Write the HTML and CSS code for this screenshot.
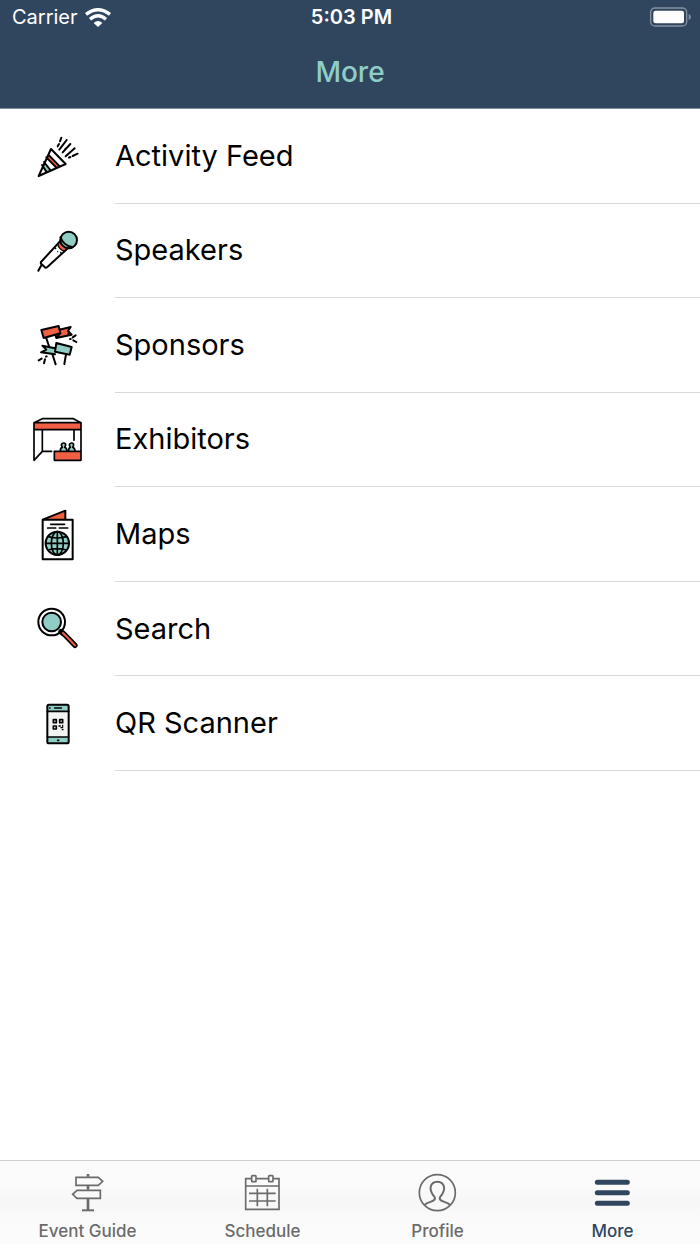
FILE: index.html
```html
<!DOCTYPE html>
<html lang="en">
<head>
<meta charset="utf-8">
<meta name="viewport" content="width=device-width, initial-scale=1">
<title>More</title>
<link rel="stylesheet" href="styles.css">
</head>
<body>
<div class="app">
  <header class="header">
    <div class="status">
      <div class="status-left">
        <span>Carrier</span>
        <svg class="wifi" viewBox="0 0 78 57" aria-hidden="true">
          <g fill="none" stroke="#fff" stroke-width="10">
            <path d="M3 19Q39-9 75 19"/>
            <path d="M15 34Q39 13 63 34"/>
          </g>
          <path d="M26 45Q39 33 52 45L39 57Z" fill="#fff"/>
        </svg>
      </div>
      <span class="status-time">5:03 PM</span>
      <div class="status-right">
        <svg class="battery" viewBox="0 0 126 60" aria-hidden="true">
          <rect x="5" y="3" width="108" height="54" rx="13" fill="none" stroke="#8290a0" stroke-width="4"/>
          <rect x="13" y="11" width="92" height="38" rx="7" fill="#fff"/>
          <path d="M119 20q7 4 7 10t-7 10z" fill="#8290a0"/>
        </svg>
      </div>
    </div>
    <h1 class="title">More</h1>
  </header>

  <main class="main">
    <ul class="list">
      <li class="item"><a class="link" href="#activity">
        <svg class="icon" viewBox="0 0 210 180" aria-hidden="true">
          <path d="M64 94L70 86L104 121L94 125Z" fill="#f15f44"/>
          <path d="M51 117L57 108L76 132L64 137Z" fill="#8fcdc5"/>
          <g class="ink">
            <path d="M78 69L122 114L41 150ZM70 86L104 121M64 94L94 125M57 108L76 132M51 117L64 137"/>
            <path d="M109 35L105 46M102 54L98 61M125 42L103 71M136 54L113 79M149 67L122 91M158 83L143 90M136 93L132 95M122 68L121 69"/>
          </g>
        </svg>
        <span class="label">Activity Feed</span></a></li>
      <li class="item"><a class="link" href="#speakers">
        <svg class="icon" viewBox="0 0 210 180" aria-hidden="true">
          <path d="M106 60Q106 77 127 83L119 92Q102 86 98 70Z" fill="#f15f44"/>
          <circle cx="131" cy="57" r="25" fill="#8fcdc5"/>
          <g class="ink">
            <circle cx="131" cy="57" r="25"/>
            <path d="M107 49Q113 73 143 79M106 60L48 123Q46 127 50 130L60 139Q64 142 68 137L127 83M50 131L40 149"/>
            <path d="M98 70Q102 85 119 91M90 80L92 83M98 92V92M107 94L110 99" stroke-width="4"/>
          </g>
        </svg>
        <span class="label">Speakers</span></a></li>
      <li class="item"><a class="link" href="#sponsors">
        <svg class="icon" viewBox="0 0 210 180" aria-hidden="true">
          <path d="M49 45L101 33L106 55L56 69ZM103 44L137 36L129 48L140 59L94 69L91 59Z" fill="#f15f44"/>
          <path d="M94 84L140 96L134 119L90 110ZM52 92L90 100V118L48 112L64 104Z" fill="#8fcdc5"/>
          <g class="ink">
            <path d="M49 45L101 33L106 55L56 69ZM103 44L137 36L129 48L140 59L94 69L91 59M94 69L106 55"/>
            <path d="M94 84L140 96L134 119L90 110ZM90 100L52 92L64 104L48 112L90 118"/>
            <path d="M64 70L73 96M82 117L92 148M123 118L118 147M130 57L131 60M135 72H137M143 67L152 61M145 76L154 81M41 136L50 131M57 145L60 133M63 125L65 124"/>
          </g>
        </svg>
        <span class="label">Sponsors</span></a></li>
      <li class="item"><a class="link" href="#exhibitors">
        <svg class="icon" viewBox="0 0 210 180" aria-hidden="true">
          <path d="M27 38H168V59H27ZM88 124H167V151H88Z" fill="#f15f44"/>
          <path d="M106 122Q106 113 112 112L109 105Q110 99 116 99T122 105L119 112Q125 113 126 122ZM131 122Q131 113 136 112L133 105Q134 99 140 99T146 105L143 112Q149 113 150 122Z" fill="#8fcdc5"/>
          <g class="ink">
            <path d="M27 38L52 26H145L168 38V151H88V124H167M27 38H168M27 59H168M27 38V151L52 124H80M52 61V124M147 61V91" stroke-width="5"/>
            <path d="M106 122Q106 113 112 112L109 105Q110 99 116 99T122 105L119 112Q125 113 126 122M131 122Q131 113 136 112L133 105Q134 99 140 99T146 105L143 112Q149 113 150 122" stroke-width="5"/>
          </g>
        </svg>
        <span class="label">Exhibitors</span></a></li>
      <li class="item"><a class="link" href="#maps">
        <svg class="icon" viewBox="0 0 210 200" aria-hidden="true">
          <path d="M53 56L121 29V56Z" fill="#f15f44"/>
          <circle cx="97" cy="127" r="35" fill="#8fcdc5"/>
          <g class="ink">
            <path d="M53 56L121 29V56M53 56H143V175H53Z"/>
            <path d="M77 70H119M68 81H92M103 81H128" stroke-width="5"/>
            <circle cx="97" cy="127" r="35"/>
            <ellipse cx="97" cy="127" rx="18" ry="35" stroke-width="5"/>
            <path d="M97 92V162M62 127H132M70 107Q97 115 124 107M70 147Q97 139 124 147" stroke-width="5"/>
          </g>
        </svg>
        <span class="label">Maps</span></a></li>
      <li class="item"><a class="link" href="#search">
        <svg class="icon" viewBox="0 0 210 180" aria-hidden="true">
          <circle cx="80" cy="69" r="28" fill="#8fcdc5"/>
          <g class="ink">
            <circle cx="80" cy="69" r="28"/>
            <circle cx="80" cy="69" r="40"/>
            <path d="M108 98L114 104M114 102L150 139" stroke-width="16"/>
          </g>
          <path d="M114 102L150 139" fill="none" stroke="#f15f44" stroke-width="6" stroke-linecap="round"/>
        </svg>
        <span class="label">Search</span></a></li>
      <li class="item"><a class="link" href="#qr">
        <svg class="icon" viewBox="0 0 210 180" aria-hidden="true">
          <rect x="67" y="32" width="64" height="116" rx="5" fill="#8fcdc5"/>
          <path d="M67 52H131V129H67Z" fill="#f2f3f3"/>
          <g class="ink">
            <rect x="67" y="32" width="64" height="116" rx="5"/>
            <path d="M67 52H131M67 129H131M89 42H109M74 42H75M98 139H101" stroke-width="5"/>
            <path d="M85 77H94V86H85ZM104 77H113V86H104ZM85 96H94V105H85Z" stroke-width="5"/>
            <path d="M102 96H106M113 94V97M108 101H113M112 107H114" stroke-width="4"/>
          </g>
        </svg>
        <span class="label">QR Scanner</span></a></li>
    </ul>
  </main>

  <nav class="tabs" aria-label="Main">
    <a class="tab" href="#guide">
      <svg class="tab-icon" viewBox="0 0 120 120" aria-hidden="true">
        <g fill="none" stroke="#6b6b6b" stroke-width="5">
          <path d="M24 13H91L104 25L91 37H24ZM97 52H27L14 64L27 76H97Z"/>
          <path d="M60 3V11M60 39V50M60 78V113" stroke-width="8"/>
          <path d="M42 112H78" stroke-width="6"/>
        </g>
      </svg>
      <span>Event Guide</span>
    </a>
    <a class="tab" href="#schedule">
      <svg class="tab-icon" viewBox="2 0 120 120" aria-hidden="true">
        <g fill="none" stroke="#6b6b6b" stroke-width="5">
          <path d="M27 17H10V109H110V17H93M42 17H78M10 39H110M20 61H100M20 84H100M45 47V100M75 47V100"/>
          <rect x="28" y="8" width="13" height="18" rx="2"/>
          <rect x="79" y="8" width="13" height="18" rx="2"/>
        </g>
      </svg>
      <span>Schedule</span>
    </a>
    <a class="tab" href="#profile">
      <svg class="tab-icon" viewBox="2 0 120 120" aria-hidden="true">
        <g fill="none" stroke="#6b6b6b" stroke-width="5">
          <circle cx="60" cy="59" r="54"/>
          <path stroke-width="6" d="M22 96Q26 91 41 86Q53 82 53 76Q53 72 47 66Q38 52 40 42Q43 26 60 26T80 42Q82 52 73 66Q67 72 67 76Q67 82 79 86Q94 91 98 96"/>
        </g>
      </svg>
      <span>Profile</span>
    </a>
    <a class="tab tab-active" href="#more" aria-current="page">
      <svg class="tab-icon" viewBox="2 0 120 120" aria-hidden="true">
        <path d="M15 28H105M15 59H105M15 91H105" fill="none" stroke="#30465f" stroke-width="15" stroke-linecap="round"/>
      </svg>
      <span>More</span>
    </a>
  </nav>
</div>
</body>
</html>
```

FILE: styles.css
```css
* { box-sizing: border-box; }

body {
  margin: 0;
  background: #fff;
  color: #000;
  font-family: Inter, "Liberation Sans", sans-serif;
}

a { color: inherit; text-decoration: none; }

.app {
  display: flex;
  flex-direction: column;
  min-height: 100vh;
}

.header {
  background: #30465f;
  border-bottom: 1px solid #82909f;
}

.status {
  display: grid;
  grid-template-columns: 1fr auto 1fr;
  align-items: center;
  height: 34px;
  padding: 0 9px 0 12px;
  color: #fff;
  font-size: 20px;
  line-height: 24px;
}

.status-left { display: flex; align-items: center; gap: 7px; }
.status-right { display: flex; justify-content: flex-end; }
.status-time { font-weight: 600; }
.wifi { width: 26px; height: 19px; }
.battery { width: 42px; height: 20px; }

.title {
  margin: 0;
  padding: 20px 0 18px;
  color: #8fcdc8;
  font-size: 28px;
  font-weight: 500;
  line-height: 36px;
  text-align: center;
}

.main { flex: 1; }

.list {
  display: grid;
  grid-auto-rows: 1fr;
  min-height: 662px;
  margin: 0;
  padding: 0;
  list-style: none;
}

.item { display: grid; }

.link {
  display: flex;
  gap: 20px;
  padding-left: 25px;
}

.icon {
  flex: none;
  align-self: center;
  width: 70px;
}

.ink {
  fill: none;
  stroke: #000;
  stroke-width: 6px;
  stroke-linecap: round;
  stroke-linejoin: round;
}

.label {
  display: flex;
  flex: 1;
  align-items: center;
  border-bottom: 1px solid #d9d9d9;
  font-size: 29px;
  line-height: 36px;
}

.tabs {
  display: grid;
  grid-template-columns: repeat(4, 1fr);
  border-top: 1px solid #cfcfcf;
  background: linear-gradient(#fafafa, #fbfbfb 25%, #f7f7f7 50%, #fbfbfb 80%);
}

.tab {
  display: flex;
  flex-direction: column;
  align-items: center;
  gap: 8px;
  padding: 12px 0 3px;
  color: #6b6b6b;
  font-size: 17px;
  font-weight: 500;
  line-height: 20px;
}

.tab-active { color: #30465f; }
.tab-icon { width: 40px; height: 40px; }
```
